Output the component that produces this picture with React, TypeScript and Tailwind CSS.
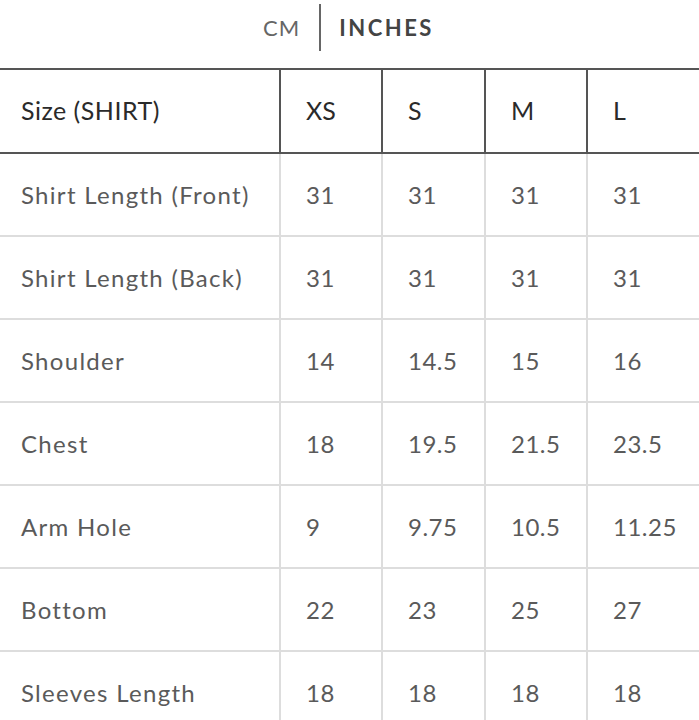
const rows: [string, string, string, string, string][] = [
  ["Shirt Length (Front)", "31", "31", "31", "31"],
  ["Shirt Length (Back)", "31", "31", "31", "31"],
  ["Shoulder", "14", "14.5", "15", "16"],
  ["Chest", "18", "19.5", "21.5", "23.5"],
  ["Arm Hole", "9", "9.75", "10.5", "11.25"],
  ["Bottom", "22", "23", "25", "27"],
  ["Sleeves Length", "18", "18", "18", "18"],
];

export default function App() {
  return (
    <div className="w-[699px] h-[720px] overflow-hidden bg-white font-['Lato',_sans-serif]">
      {/* unit toggle */}
      <div className="flex items-center justify-center h-[68px] pb-[14px] pr-[2px]">
        <span className="text-[22px] tracking-[1px] text-[#666]">CM</span>
        <span className="ml-[19px] mr-[18px] w-[2px] h-[47px] bg-[#666]" />
        <span className="text-[22px] font-bold tracking-[2.5px] text-[#444]">INCHES</span>
      </div>

      <table className="w-[720px] border-collapse table-fixed">
        <colgroup>
          <col className="w-[280px]" />
          <col className="w-[102px]" />
          <col className="w-[103px]" />
          <col className="w-[102px]" />
          <col className="w-[133px]" />
        </colgroup>
        <thead>
          <tr className="h-[84px] border-y-2 border-[#555]">
            <th className="pl-[21px] text-left font-normal text-[25px] text-[#2a2a2a] tracking-[0.5px]">
              Size (SHIRT)
            </th>
            {["XS", "S", "M", "L"].map((s) => (
              <th
                key={s}
                className="pl-[25px] text-left font-normal text-[25px] text-[#2a2a2a] border-l-2 border-[#555]"
              >
                {s}
              </th>
            ))}
          </tr>
        </thead>
        <tbody>
          {rows.map((r) => (
            <tr key={r[0]} className="h-[83px] border-b-2 border-[#dddddd]">
              <td className="pl-[21px] text-[24px] text-[#5a5a5a] tracking-[1.3px]">{r[0]}</td>
              {r.slice(1).map((v, i) => (
                <td
                  key={i}
                  className="pl-[25px] text-[24px] text-[#5a5a5a] tracking-[0.5px] border-l-2 border-[#dddddd]"
                >
                  {v}
                </td>
              ))}
            </tr>
          ))}
        </tbody>
      </table>
    </div>
  );
}
